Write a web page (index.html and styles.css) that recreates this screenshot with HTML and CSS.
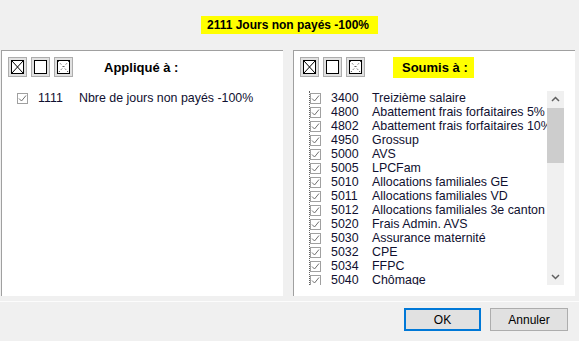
FILE: index.html
```html
<!DOCTYPE html>
<html lang="fr">
<head>
    <meta charset="UTF-8">
    <title>2111 Jours non payés -100%</title>
    <link rel="stylesheet" href="styles.css">
</head>
<body>
    <!-- Titre -->
    <div class="title-bar">
        <div class="title">2111 Jours non payés -100%</div>
    </div>

    <!-- Deux panneaux -->
    <div class="panels">
        <div class="panel">
            <div class="panel-header">
                <div class="tools">
                    <svg class="tool" viewBox="0 0 19 20"><rect x="0.5" y="0.5" width="18" height="19" fill="#e1e1e1" stroke="#adadad"/><rect x="3.5" y="3.5" width="12" height="13" fill="#fff" stroke="#000"/><path d="M4 4L15 16M15 4L4 16" stroke="#000"/></svg>
                    <svg class="tool" viewBox="0 0 19 20"><rect x="0.5" y="0.5" width="18" height="19" fill="#e1e1e1" stroke="#adadad"/><rect x="3.5" y="3.5" width="12" height="13" fill="#fff" stroke="#000"/></svg>
                    <svg class="tool" viewBox="0 0 19 20"><rect x="0.5" y="0.5" width="18" height="19" fill="#e1e1e1" stroke="#adadad"/><rect x="3.5" y="3.5" width="12" height="13" fill="#fff" stroke="#000"/><path d="M4 4L15 16M15 4L4 16" stroke="#000" stroke-dasharray="1 2.5"/></svg>
                </div>
                <div class="panel-title">Appliqué à :</div>
            </div>
            <div class="list">
                <div class="rows">
                    <div class="row">
                        <svg class="check" viewBox="0 0 11 11"><rect x="0.5" y="0.5" width="10" height="10" fill="#fff" stroke="#a0a0a0"/><path d="M2 5.5L4.5 8L9 2.5" fill="none" stroke="#707070"/></svg>
                        <span class="code">1111</span>
                        <span class="name">Nbre de jours non payés -100%</span>
                    </div>
                </div>
            </div>
        </div>

        <div class="panel">
            <div class="panel-header">
                <div class="tools">
                    <svg class="tool" viewBox="0 0 19 20"><rect x="0.5" y="0.5" width="18" height="19" fill="#e1e1e1" stroke="#adadad"/><rect x="3.5" y="3.5" width="12" height="13" fill="#fff" stroke="#000"/><path d="M4 4L15 16M15 4L4 16" stroke="#000"/></svg>
                    <svg class="tool" viewBox="0 0 19 20"><rect x="0.5" y="0.5" width="18" height="19" fill="#e1e1e1" stroke="#adadad"/><rect x="3.5" y="3.5" width="12" height="13" fill="#fff" stroke="#000"/></svg>
                    <svg class="tool" viewBox="0 0 19 20"><rect x="0.5" y="0.5" width="18" height="19" fill="#e1e1e1" stroke="#adadad"/><rect x="3.5" y="3.5" width="12" height="13" fill="#fff" stroke="#000"/><path d="M4 4L15 16M15 4L4 16" stroke="#000" stroke-dasharray="1 2.5"/></svg>
                </div>
                <div class="panel-title highlight">Soumis à :</div>
            </div>
            <div class="list list-box">
                <div class="rows focused" id="soumisRows"></div>
                <div class="scrollbar">
                    <div class="arrow">
                        <svg viewBox="0 0 17 17"><path d="M5 10L8.5 6.5L12 10" fill="none" stroke="#606060" stroke-width="1.5"/></svg>
                    </div>
                    <div class="track">
                        <div class="thumb"></div>
                    </div>
                    <div class="arrow">
                        <svg viewBox="0 0 17 17"><path d="M5 7L8.5 10.5L12 7" fill="none" stroke="#606060" stroke-width="1.5"/></svg>
                    </div>
                </div>
            </div>
        </div>
    </div>

    <!-- Boutons -->
    <div class="footer">
        <button class="btn default">OK</button>
        <button class="btn">Annuler</button>
    </div>

    <script>
        const soumis = [
            ["3400", "Treizième salaire"],
            ["4800", "Abattement frais forfaitaires 5%"],
            ["4802", "Abattement frais forfaitaires 10%"],
            ["4950", "Grossup"],
            ["5000", "AVS"],
            ["5005", "LPCFam"],
            ["5010", "Allocations familiales GE"],
            ["5011", "Allocations familiales VD"],
            ["5012", "Allocations familiales 3e canton"],
            ["5020", "Frais Admin. AVS"],
            ["5030", "Assurance maternité"],
            ["5032", "CPE"],
            ["5034", "FFPC"],
            ["5040", "Chômage"]
        ];

        const checkSvg = '<svg class="check" viewBox="0 0 11 11"><rect x="0.5" y="0.5" width="10" height="10" fill="#fff" stroke="#a0a0a0"/><path d="M2 5.5L4.5 8L9 2.5" fill="none" stroke="#707070"/></svg>';

        const rows = document.getElementById('soumisRows');
        soumis.forEach(item => {
            const row = document.createElement('div');
            row.className = 'row';
            row.innerHTML = `${checkSvg}<span class="code">${item[0]}</span><span class="name">${item[1]}</span>`;
            rows.appendChild(row);
        });
    </script>
</body>
</html>
```

FILE: styles.css
```css
* {
    margin: 0;
    padding: 0;
    box-sizing: border-box;
}

body {
    width: 579px;
    height: 341px;
    overflow: hidden;
    background-color: #f0f0f0;
    font-family: 'Liberation Sans', Arial, sans-serif;
    font-size: 12px;
    color: #000;
}

/* Titre */
.title-bar {
    height: 50px;
    padding-top: 16px;
    display: flex;
    justify-content: center;
}

.title {
    height: 18px;
    line-height: 18px;
    padding: 0 9px 0 6px;
    background-color: #ffff00;
    font-weight: bold;
    font-size: 12px;
}

/* Panneaux */
.panels {
    height: 246px;
    padding-left: 1px;
    display: flex;
    gap: 10px;
}

.panel {
    width: 282px;
    background-color: #fff;
    border-left: 1px solid #a0a0a0;
    border-top: 1px solid #a0a0a0;
    display: flex;
    flex-direction: column;
}

.panel-header {
    height: 27px;
    padding: 5px 0 0 6px;
    display: flex;
    align-items: center;
}

.tools {
    display: flex;
    gap: 4px;
}

.tool {
    width: 19px;
    height: 20px;
    display: block;
}

.panel-title {
    margin-left: 31px;
    font-size: 13px;
    font-weight: bold;
    line-height: 21px;
}

.panel-title.highlight {
    margin-left: 28px;
    padding: 0 6px 0 9px;
    background-color: #ffff00;
}

/* Listes */
.list {
    margin-top: 13px;
    padding-left: 15px;
    display: flex;
}

.list-box {
    height: 194px;
    margin-right: 11px;
}

.rows {
    flex: 1;
    overflow: hidden;
}

.rows.focused {
    border-left: 1px dotted #606060;
}

.row {
    height: 14px;
    display: flex;
    align-items: center;
    white-space: nowrap;
    line-height: 14px;
    font-size: 12.4px;
    color: #101030;
}

.check {
    width: 11px;
    height: 11px;
    flex-shrink: 0;
    margin-right: 10px;
}

.code {
    width: 41px;
    flex-shrink: 0;
}

/* Barre de défilement */
.scrollbar {
    width: 17px;
    flex-shrink: 0;
    background-color: #f0f0f0;
    display: flex;
    flex-direction: column;
}

.arrow {
    height: 17px;
}

.arrow svg {
    width: 17px;
    height: 17px;
    display: block;
}

.track {
    flex: 1;
}

.thumb {
    height: 55px;
    background-color: #cdcdcd;
}

/* Boutons */
.footer {
    margin-top: 5px;
    border-top: 1px solid #fcfcfc;
    padding: 6px 11px 0 0;
    display: flex;
    justify-content: flex-end;
    gap: 9px;
}

.btn {
    width: 77px;
    height: 23px;
    background-color: #e1e1e1;
    border: 1px solid #adadad;
    font-family: 'Liberation Sans', Arial, sans-serif;
    font-size: 12px;
    color: #000;
}

.btn.default {
    border: 2px solid #0078d7;
}

.btn + .btn {
    width: 78px;
}
```
